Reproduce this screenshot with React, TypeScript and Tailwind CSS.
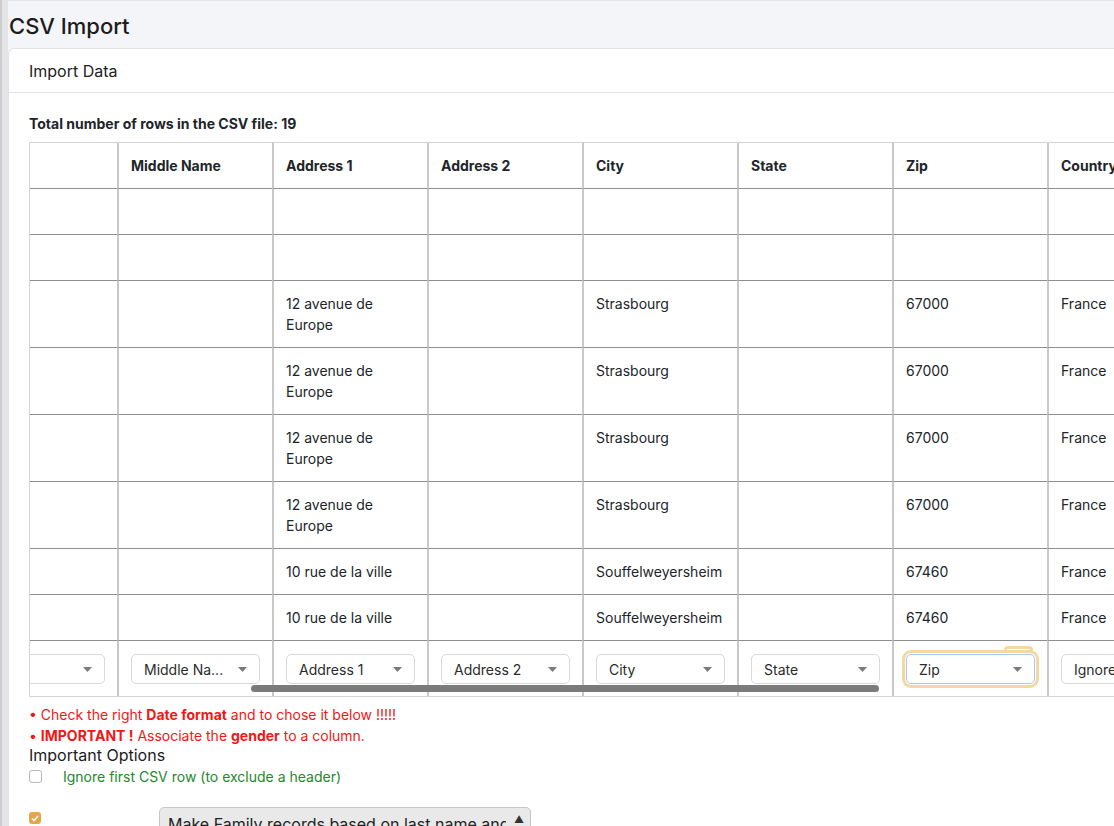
import React from 'react'

const headers = ['', 'Middle Name', 'Address 1', 'Address 2', 'City', 'State', 'Zip', 'Country']
const mappings = ['', 'Middle Na...', 'Address 1', 'Address 2', 'City', 'State', 'Zip', 'Ignore']

const strasbourg = ['', '', '12 avenue de Europe', '', 'Strasbourg', '', '67000', 'France']
const souffel = ['', '', '10 rue de la ville', '', 'Souffelweyersheim', '', '67460', 'France']
const empty = ['', '', '', '', '', '', '', '']

const rows = [empty, empty, strasbourg, strasbourg, strasbourg, strasbourg, souffel, souffel]

function Caret() {
  return (
    <svg width="9" height="5" viewBox="0 0 9 5" className="shrink-0">
      <path d="M0 0h9L4.5 5z" fill="#7a7a7a" />
    </svg>
  )
}

function MapSelect({ label, focused }: { label: string; focused?: boolean }) {
  return (
    <div
      className={
        'relative flex h-[30px] w-[129px] items-center justify-between rounded-[5px] border bg-white pl-[12px] pr-[12px] text-[14px] text-[#2b2b2b] ' +
        (focused
          ? 'border-[#a9c8f3] outline-[3px] outline-offset-[1px] outline-solid outline-[#f3d8a2]'
          : 'border-[#d9d9d9]')
      }
    >
      <span className="truncate">{label}</span>
      <Caret />
      {focused && (
        <div className="absolute -top-[9px] right-[1px] h-[6px] w-[29px] rounded-t-[4px] border-[3px] border-b-0 border-[#f3d8a2]" />
      )}
    </div>
  )
}

export default function App() {
  return (
    <div className="flex min-h-screen w-full overflow-hidden font-[Inter,'Liberation_Sans',sans-serif] text-[#212529]">
      {/* left edge of the sidebar */}
      <div className="flex shrink-0">
        <div className="w-[2px] bg-[#cdcdcd]" />
        <div className="w-[6px] bg-[#e4e4e6]" />
      </div>

      <div className="min-w-0 flex-1 border-t border-[#e4e5e8] bg-[#f4f5f8]">
        <h1 className="h-[47px] pl-[1px] pt-[11px] text-[22px] font-medium leading-[28px] text-[#1c1c1c]">CSV Import</h1>

        <div className="w-[1200px] rounded-tl-[6px] border-l border-t border-[#e0e1e4] bg-white">
          <div className="flex h-[44px] items-center border-b border-[#e3e4e7] px-[20px] text-[16px] text-[#222]">
            Import Data
          </div>

          <div className="px-[20px] pt-[20px] pb-[40px]">
            <div className="text-[14px] font-bold leading-[21px]">Total number of rows in the CSV file: 19</div>

            {/* table, scrolled horizontally */}
            <div className="relative mt-[8px] w-[1100px] overflow-hidden border-y border-l border-[#d4d4d4]">
              <table className="-ml-[68px] w-[1240px] table-fixed border-separate border-spacing-0 text-[14px] leading-[21px]">
                <colgroup>
                  {headers.map((_, i) => (
                    <col key={i} className="w-[155px]" />
                  ))}
                </colgroup>
                <thead>
                  <tr>
                    {headers.map((h, i) => (
                      <th
                        key={i}
                        className="border-b border-l-2 border-b-[#8e8e8e] border-l-[#c9c9c9] pl-[12px] pr-[10px] py-3 text-left font-bold"
                      >
                        {h}
                      </th>
                    ))}
                  </tr>
                </thead>
                <tbody>
                  {rows.map((r, ri) => (
                    <tr key={ri}>
                      {r.map((c, ci) => (
                        <td
                          key={ci}
                          className="h-[46px] border-b border-l-2 border-b-[#8e8e8e] border-l-[#c9c9c9] pl-[12px] pr-[10px] py-3 align-top"
                        >
                          {c}
                        </td>
                      ))}
                    </tr>
                  ))}
                  <tr>
                    {mappings.map((m, i) => (
                      <td key={i} className="border-l-2 border-l-[#c9c9c9] pl-[12px] pr-[10px] pt-[13px] pb-3 align-top">
                        <MapSelect label={m} focused={i === 6} />
                      </td>
                    ))}
                  </tr>
                </tbody>
              </table>
              {/* overlay scrollbar */}
              <div className="absolute bottom-[4px] left-[221px] h-[7px] w-[628px] rounded-full bg-[#7b7b7b]" />
            </div>

            <div className="mt-[7px] text-[14px] leading-[21px] text-[#f21616]">
              <div>
                • Check the right <b>Date format</b> and to chose it below !!!!!
              </div>
              <div>
                • <b>IMPORTANT !</b> Associate the <b>gender</b> to a column.
              </div>
            </div>

            <div className="text-[16px] leading-[19px] text-[#1c1c1c]">Important Options</div>

            <div className="mt-[1px] flex h-[21px] items-center">
              <div className="h-[13px] w-[13px] rounded-[3px] border border-[#b8b8b8] bg-white" />
              <span className="ml-[21px] text-[14px] text-[#23892a]">Ignore first CSV row (to exclude a header)</span>
            </div>

            <div className="mt-[20px] flex items-start">
              <div className="mt-[5px] flex h-[12px] w-[12px] items-center justify-center rounded-[3px] bg-[#e3a74a]">
                <svg width="8" height="7" viewBox="0 0 8 7">
                  <path d="M1 3.6l2 2L7 1" fill="none" stroke="#fff" strokeWidth="1.4" />
                </svg>
              </div>
              <div className="ml-[118px] flex h-[38px] w-[372px] items-start rounded-[5px] border border-[#c6c6c6] bg-[#e9e9e9] pl-[8px] pr-[6px] pt-[4px] text-[16px] leading-[24px] text-[#222]">
                <span className="min-w-0 flex-1 overflow-hidden whitespace-nowrap">
                  Make Family records based on last name and address
                </span>
                <span className="ml-[8px] text-[10px] leading-[14px] text-[#333]">▲</span>
              </div>
            </div>
          </div>
        </div>
      </div>
    </div>
  )
}
